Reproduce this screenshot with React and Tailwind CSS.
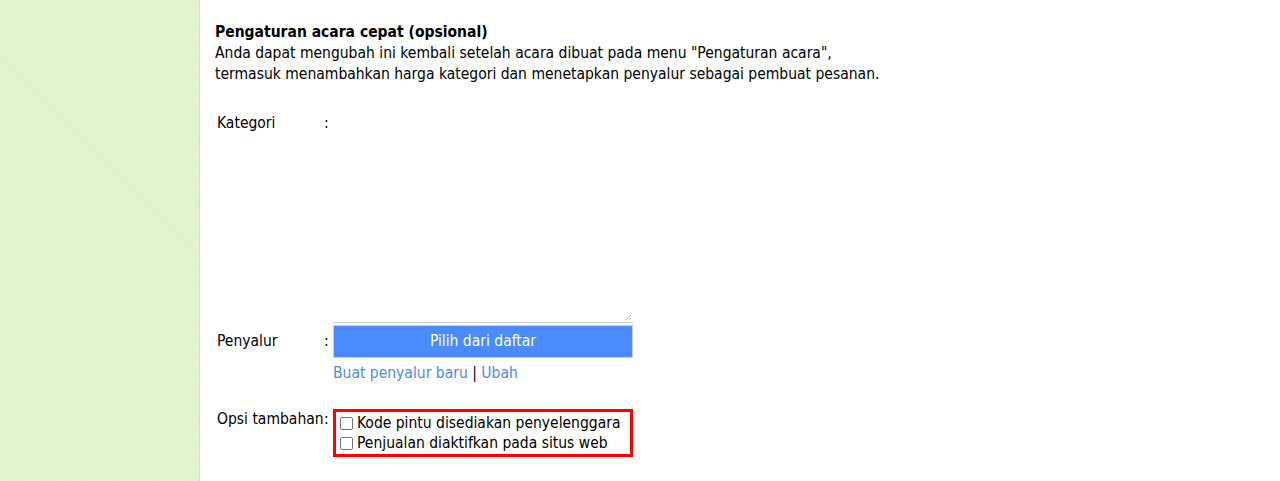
export default function App() {
  const font = { fontFamily: '"DejaVu Sans Condensed", "DejaVu Sans", sans-serif' };
  return (
    <div className="flex h-[481px] w-[1280px] bg-white text-[15.5px] leading-[21px] text-black" style={font}>
      <div className="w-[200px] shrink-0 border-r border-[#d4dcc8] bg-[#def2cb] bg-[repeating-linear-gradient(45deg,rgba(255,255,255,0.18)_0px,rgba(255,255,255,0.18)_1px,transparent_1px,transparent_3px)]" />
      <div className="flex-1 pl-[15px] pt-[22px]">
        <div className="font-bold">Pengaturan acara cepat (opsional)</div>
        <div>Anda dapat mengubah ini kembali setelah acara dibuat pada menu "Pengaturan acara",</div>
        <div>termasuk menambahkan harga kategori dan menetapkan penyalur sebagai pembuat pesanan.</div>

        <div className="mt-[28px] flex">
          <div className="w-[109px] whitespace-nowrap pl-[2px]">Kategori</div>
          <div className="w-[9px]">:</div>
          <div className="relative h-[210px] w-[300px] border-b border-[#cccccc]">
            <svg className="absolute bottom-[1px] right-[1px]" width="7" height="7" viewBox="0 0 7 7">
              <path d="M6 1 L1 6 M6 4 L4 6" stroke="#b0b0b0" strokeWidth="1" />
            </svg>
          </div>
        </div>

        <div className="mt-[2px] flex">
          <div className="w-[109px] whitespace-nowrap pl-[2px] pt-[6px]">Penyalur</div>
          <div className="w-[9px] pt-[6px]">:</div>
          <div className="w-[300px]">
            <div className="flex h-[33px] items-center justify-center border border-[#d0d0d0] bg-[#4a8bff] text-white">
              Pilih dari daftar
            </div>
            <div className="mt-[5px] whitespace-nowrap text-[#4a8bf0]">
              <span>Buat penyalur baru</span>
              <span className="text-black"> | </span>
              <span>Ubah</span>
            </div>
          </div>
        </div>

        <div className="mt-[25px] flex">
          <div className="w-[109px] whitespace-nowrap pl-[2px]">Opsi tambahan</div>
          <div className="w-[9px]">:</div>
          <div className="w-[300px] border-[3px] border-[#ff0000] py-[1px] pl-[4px]">
            <label className="flex items-center whitespace-nowrap leading-[20px]">
              <span className="mr-[4px] inline-block h-[13px] w-[13px] shrink-0 rounded-[2px] border border-[#767676] bg-white" />
              Kode pintu disediakan penyelenggara
            </label>
            <label className="flex items-center whitespace-nowrap leading-[20px]">
              <span className="mr-[4px] inline-block h-[13px] w-[13px] shrink-0 rounded-[2px] border border-[#767676] bg-white" />
              Penjualan diaktifkan pada situs web
            </label>
          </div>
        </div>
      </div>
    </div>
  );
}
